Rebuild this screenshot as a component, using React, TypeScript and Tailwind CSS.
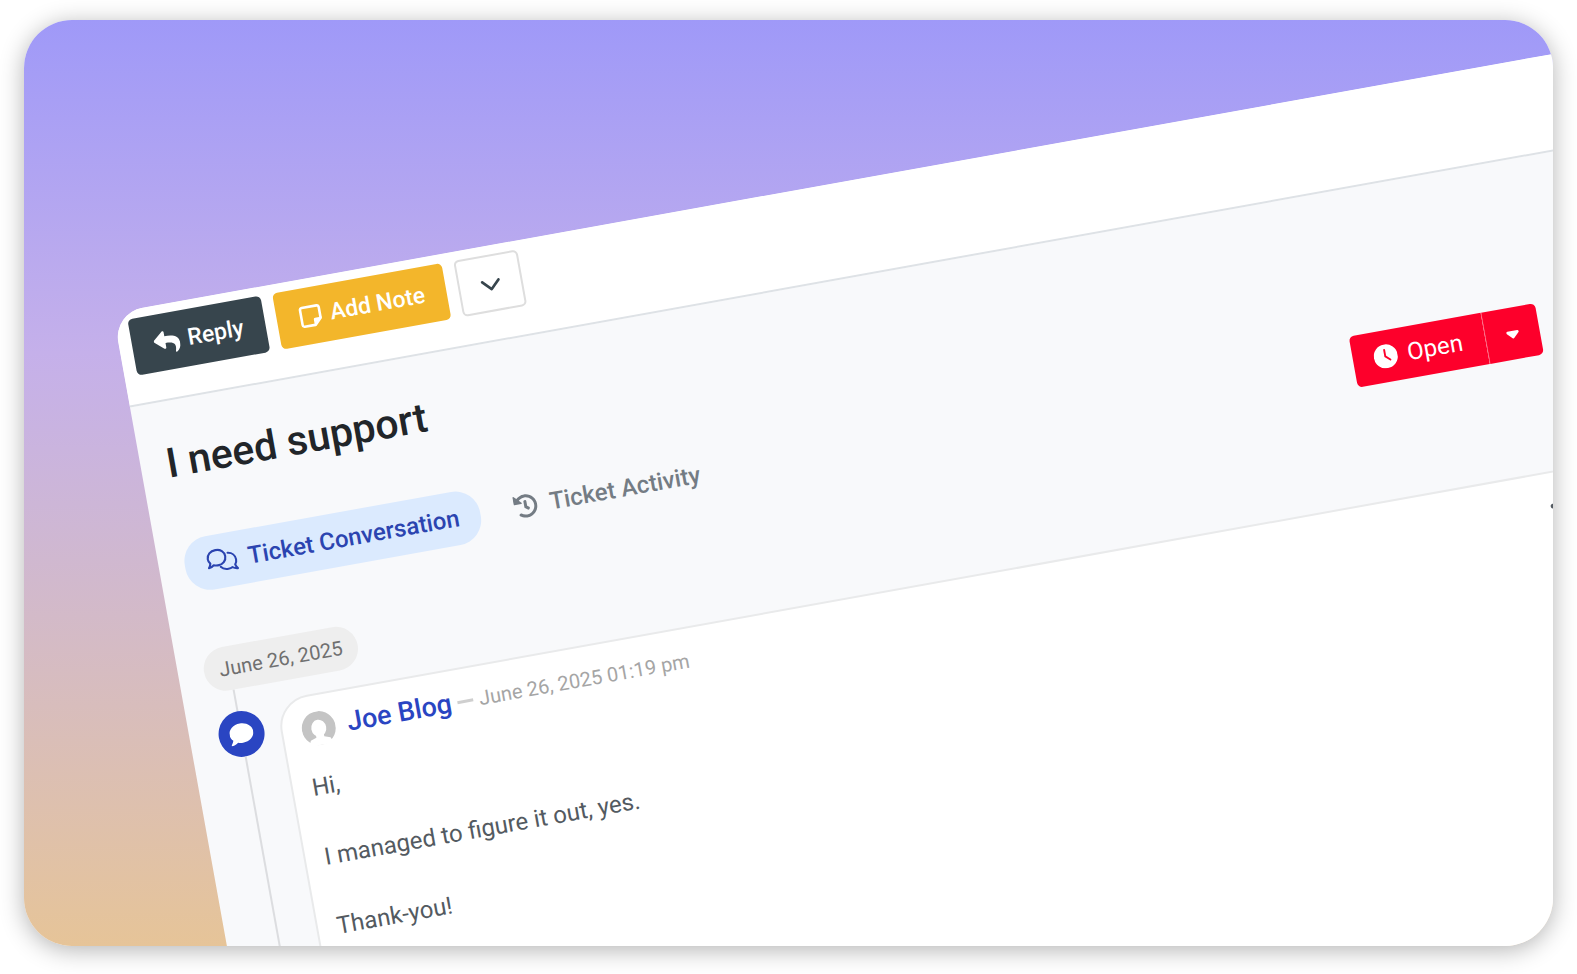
import React from "react";
import { FaReply, FaComment, FaHistory } from "react-icons/fa";
import { FaChevronDown, FaCaretDown, FaEllipsis } from "react-icons/fa6";

function NoteIcon() {
  return (
    <svg viewBox="0 0 24 24" className="size-6" fill="none" aria-hidden="true">
      <path d="M21.500 15V4.500A2 2 0 0 0 19.500 2.500h-15A2 2 0 0 0 2.500 4.500v15a2 2 0 0 0 2 2H15" stroke="currentColor" strokeWidth="2.600" />
      <path d="M14.500 22.800v-6.800a1.500 1.500 0 0 1 1.500-1.500h6.800v1.500L16 22.800z" fill="currentColor" />
    </svg>
  );
}

function ClockIcon() {
  return (
    <svg viewBox="0 0 24 24" className="size-6" aria-hidden="true">
      <circle cx="12" cy="12" r="12" fill="currentColor" />
      <path d="M11.500 5.500V12l4.500 4" fill="none" stroke="#fd002b" strokeWidth="1.900" strokeLinecap="round" />
    </svg>
  );
}

function ChatsIcon() {
  return (
    <svg viewBox="0 0 32 26" className="w-[31px]" fill="none" stroke="currentColor" strokeWidth="2.200" strokeLinejoin="round" strokeLinecap="round" aria-hidden="true">
      <path d="M11 1.500c5.300 0 9 3.500 9 8s-3.700 8-9 8c-1.600 0-3-.3-4.300-.9-1.500 1.200-3.300 2-5.400 2.200 1.200-1.400 1.900-2.900 2.200-4.400C2.300 13 1.700 11.300 1.700 9.500c0-4.500 4-8 9.300-8z" />
      <path d="M23 6.500c4.400.6 7.500 4 7.500 8.200 0 1.800-.6 3.500-1.800 4.900.3 1.500 1 3 2.100 4.400-2.100-.2-3.900-.9-5.400-2-1.300.6-2.700.9-4.300.9-3.300 0-6-1.200-7.600-3.400" />
    </svg>
  );
}

function Toolbar() {
  return (
    <header className="flex h-[96px] items-start gap-3 border-b-2 border-[#dee2e6] bg-white pt-[9px] pl-[13px]">
      <button className="flex h-[57px] items-center gap-2 rounded-[5px] bg-[#37454d] px-[22px] text-[23px] leading-8 font-medium text-white">
        <FaReply className="size-[26px]" />
        Reply
      </button>
      <button className="flex h-[57px] items-center gap-2 rounded-[5px] bg-[#f3b62b] px-[22px] text-[23px] leading-8 font-medium text-white">
        <NoteIcon />
        Add Note
      </button>
      <button aria-label="More actions" className="flex h-[57px] w-[65px] items-center justify-center rounded-[5px] border-2 border-[#dedede] bg-white text-[#37454d]">
        <FaChevronDown className="size-[22px]" />
      </button>
    </header>
  );
}

function StatusButton() {
  return (
    <div className="mt-[6px] flex h-[52px] text-white">
      <button className="flex w-[134px] items-center gap-[10px] rounded-l-[5px] bg-[#fd002b] pl-[21px] text-[24px] leading-8">
        <ClockIcon />
        Open
      </button>
      <button aria-label="Change status" className="flex w-[55px] items-center justify-center rounded-r-[5px] border-l border-[#fd5571] bg-[#fd002b]">
        <FaCaretDown className="size-5" />
      </button>
    </div>
  );
}

function Tabs() {
  return (
    <nav className="flex h-[54px]">
      <a href="#conversation" className="flex items-center gap-[11px] rounded-[25px] bg-[#dbeafe] px-[22px] text-[24px] leading-8 font-medium text-[#2b44b0]">
        <ChatsIcon />
        Ticket Conversation
      </a>
      <a href="#activity" className="flex items-center gap-3 px-[34px] text-[24px] leading-8 font-medium text-[#747c84]">
        <FaHistory className="size-6" />
        Ticket Activity
      </a>
    </nav>
  );
}

function Avatar() {
  return (
    <svg viewBox="0 0 34 34" className="size-[34px] shrink-0" aria-hidden="true">
      <circle cx="17" cy="17" r="17" fill="#c4c4c4" />
      <ellipse cx="17" cy="17" rx="7.500" ry="8.500" fill="#fff" />
      <path d="M13 23h8v3l6 2 3 7H4l3-7 6-2z" fill="#fff" />
    </svg>
  );
}

function Message() {
  return (
    <article className="-mt-[2px] min-h-[500px] flex-1 rounded-tl-[32px] border-2 border-[#e9eaeb] bg-white pt-[15px] pl-[19px] text-[24px] leading-[35px] text-[#535a61]">
      <div className="flex items-center pr-[126px]">
        <Avatar />
        <h2 className="ml-3 text-[27px] font-medium text-[#2a45c2]">Joe Blog</h2>
        <span className="ml-[6px] h-[3px] w-4 bg-[#cfcfcf]" />
        <time className="ml-[6px] text-[20px] text-[#a5a5a5]">June 26, 2025 01:19 pm</time>
        <button aria-label="Message options" className="ml-auto">
          <FaEllipsis className="size-[22px]" />
        </button>
      </div>
      <div className="mt-6 flex flex-col gap-[35px]">
        <p>Hi,</p>
        <p>I managed to figure it out, yes.</p>
        <p>Thank-you!</p>
      </div>
    </article>
  );
}

function Timeline() {
  return (
    <section className="pt-[54px] pl-[26px]">
      <time className="flex h-11 w-[156px] items-center justify-center rounded-[22px] bg-[#eeeeee] text-[20px] leading-7 text-[#707070]">
        June 26, 2025
      </time>
      <div className="flex items-stretch">
        <div className="flex w-[51px] flex-col items-center">
          <span className="h-[22px] w-[2px] bg-[#dcdde0]" />
          <span className="flex size-[46px] items-center justify-center rounded-full bg-[#2a45c2] text-white">
            <FaComment className="size-6" />
          </span>
          <span className="w-[2px] flex-1 bg-[#dcdde0]" />
        </div>
        <div className="flex flex-1 pt-[20px] pl-[14px]">
          <Message />
        </div>
      </div>
    </section>
  );
}

export default function App() {
  return (
    <main className="flex h-screen bg-white px-6 pt-5 pb-7 font-[Roboto,sans-serif]">
      <div className="flex flex-1 items-start overflow-hidden rounded-[48px] bg-linear-to-b from-[#9f99f8] via-[#c5b0ea] via-36% to-[#e6c498] shadow-[0_4px_24px_rgba(0,0,0,0.3)]">
        <div className="mt-[293px] ml-[89px] min-h-[900px] w-full shrink-0 origin-top-left rotate-[-10.2deg] overflow-hidden rounded-tl-[30px] bg-[#f8f9fb]">
          <Toolbar />
          <h1 className="pt-[34px] pl-[26px] text-[41px] leading-[56px] font-medium text-[#212529]">I need support</h1>
          <div className="flex items-start justify-between pt-[50px] pr-[128px] pl-[26px]">
            <Tabs />
            <StatusButton />
          </div>
          <Timeline />
        </div>
      </div>
    </main>
  );
}
